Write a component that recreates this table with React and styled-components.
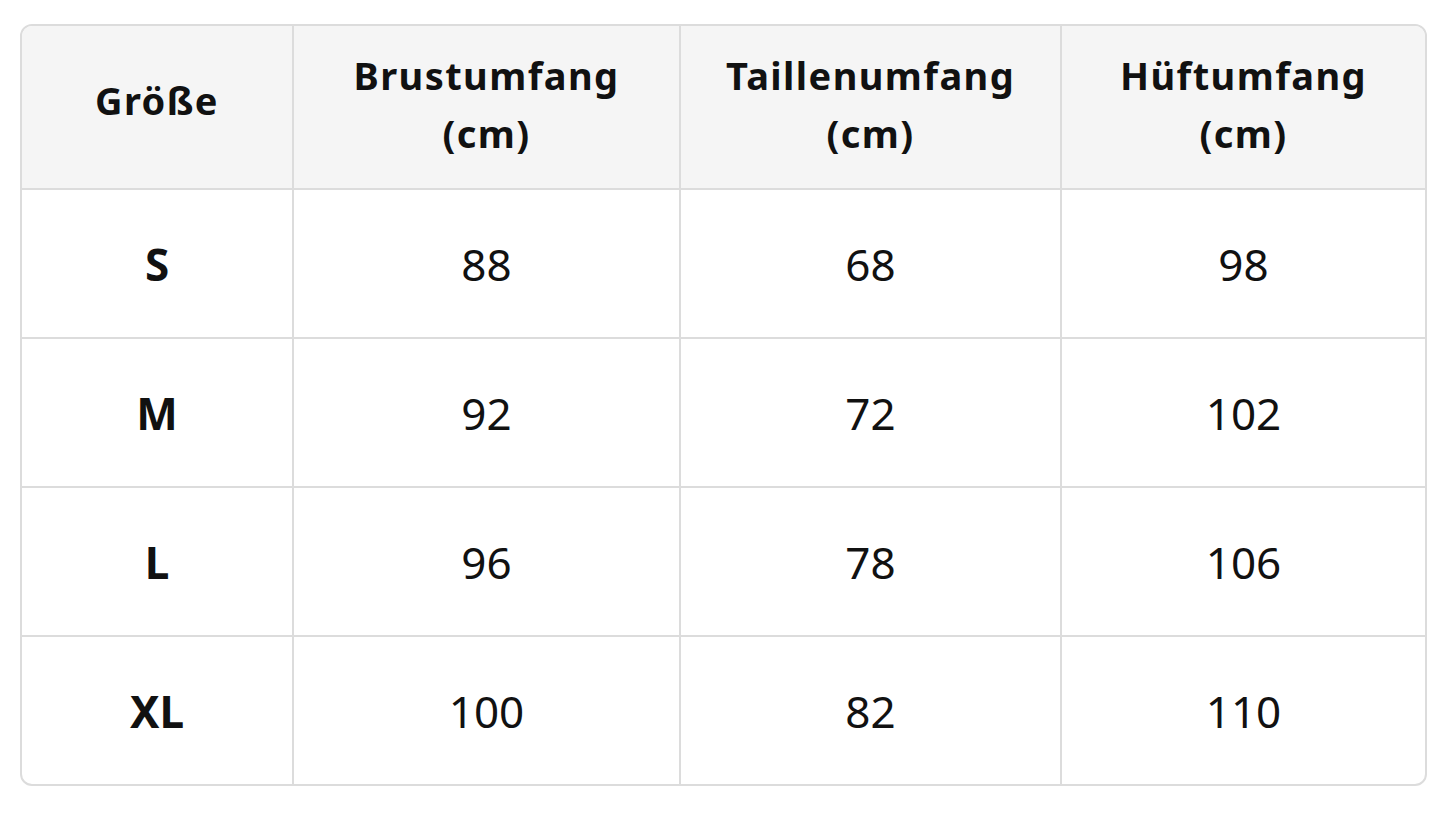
import React from 'react';
import styled, { createGlobalStyle } from 'styled-components';

const GlobalStyle = createGlobalStyle`
  body {
    margin: 0;
    background: #ffffff;
    font-family: 'Noto Sans', 'Open Sans', sans-serif;
    color: #111111;
  }
`

const Wrapper = styled.div`
  margin: 24px 18px 0 20px;
  border: 2px solid #dcdcdc;
  border-radius: 12px;
  overflow: hidden;
`

const Table = styled.table`
  width: 100%;
  border-collapse: collapse;
  table-layout: fixed;
`

const HeadCell = styled.th`
  background: #f5f5f5;
  height: 163px;
  box-sizing: border-box;
  padding: 0 8px ${(p) => (p.$single ? 14 : 6)}px;
  font-size: 38px;
  font-weight: 700;
  letter-spacing: 1.4px;
  line-height: 58px;
  text-align: center;
  border-right: 2px solid #dcdcdc;
  border-bottom: 2px solid #dcdcdc;

  &:last-child {
    border-right: none;
  }
`

const Cell = styled.td`
  height: 147px;
  padding: 0;
  font-size: 44px;
  font-weight: ${(p) => (p.$bold ? 700 : 400)};
  text-align: center;
  border-right: 2px solid #dcdcdc;
  border-bottom: 2px solid #dcdcdc;

  &:last-child {
    border-right: none;
  }

  tr:last-child & {
    border-bottom: none;
  }
`

const rows = [
  ['S', 88, 68, 98],
  ['M', 92, 72, 102],
  ['L', 96, 78, 106],
  ['XL', 100, 82, 110],
];

export default function App() {
  return (
    <>
      <GlobalStyle />
      <Wrapper>
        <Table>
          <colgroup>
            <col style={{ width: 271 }} />
            <col style={{ width: 387 }} />
            <col style={{ width: 381 }} />
            <col />
          </colgroup>
          <thead>
            <tr>
              <HeadCell $single>Größe</HeadCell>
              <HeadCell>Brustumfang<br />(cm)</HeadCell>
              <HeadCell>Taillenumfang<br />(cm)</HeadCell>
              <HeadCell>Hüftumfang<br />(cm)</HeadCell>
            </tr>
          </thead>
          <tbody>
            {rows.map((r) => (
              <tr key={r[0]}>
                <Cell $bold>{r[0]}</Cell>
                <Cell>{r[1]}</Cell>
                <Cell>{r[2]}</Cell>
                <Cell>{r[3]}</Cell>
              </tr>
            ))}
          </tbody>
        </Table>
      </Wrapper>
    </>
  );
}
